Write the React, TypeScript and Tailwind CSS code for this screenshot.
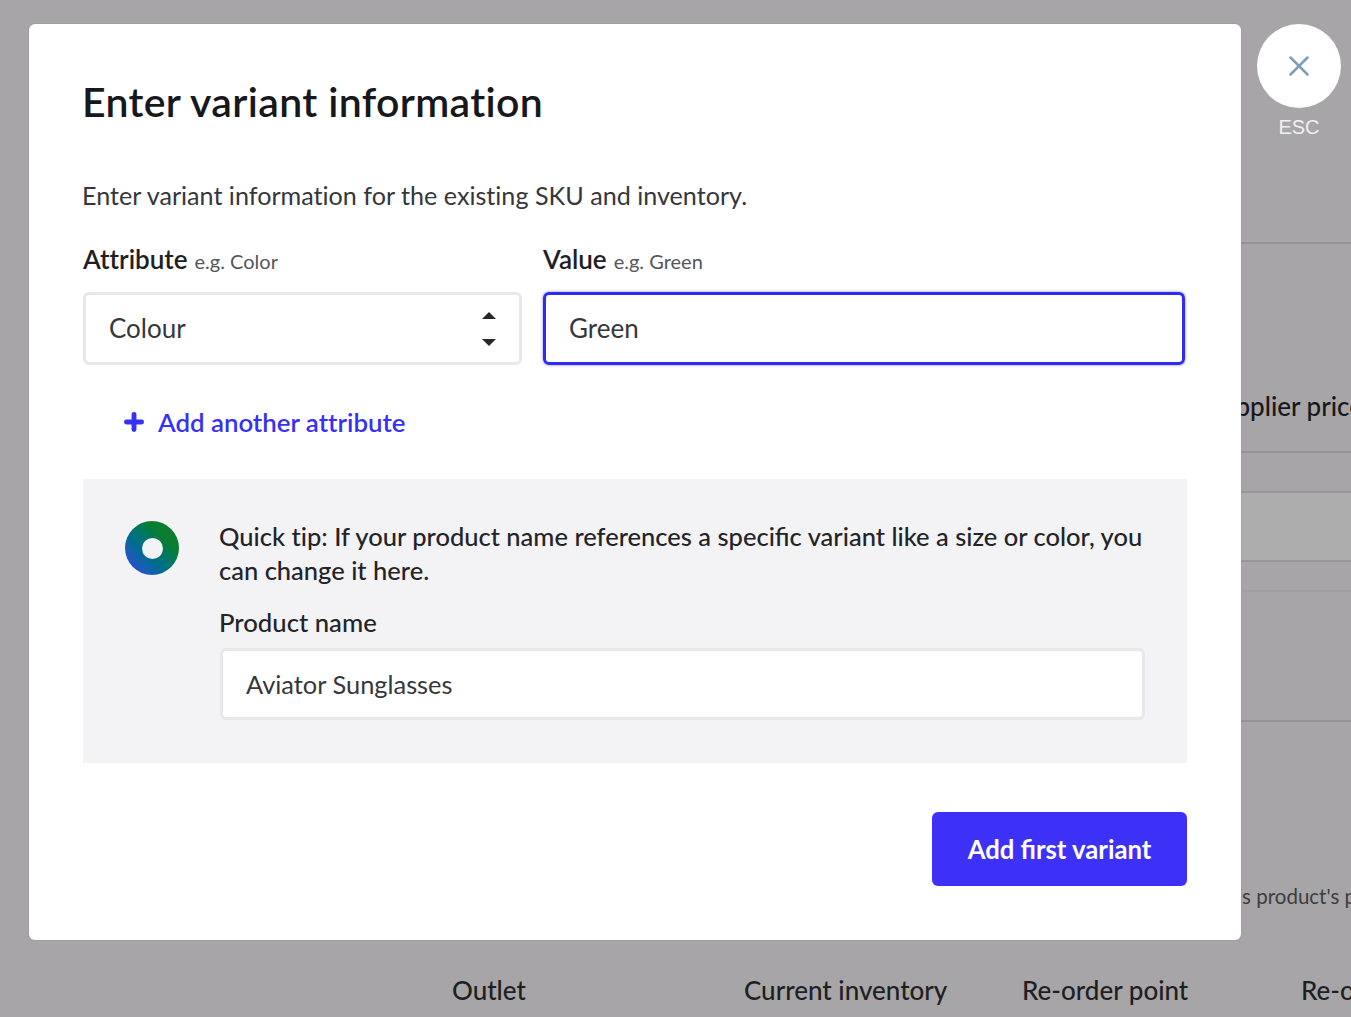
import { X, Plus } from 'lucide-react';

const font = "font-['Lato',sans-serif] [font-variant-ligatures:none]";
const liga = '[font-variant-ligatures:common-ligatures]';

function Field({ label, hint, children }: { label: string; hint: string; children: React.ReactNode }) {
  return (
    <div>
      <div className="flex items-baseline gap-[7px] h-[30px]">
        <span className="text-[26px] leading-[30px] text-[#1f2023] font-semibold">{label}</span>
        <span className="text-[20px] leading-[30px] text-[#55565b]">{hint}</span>
      </div>
      {children}
    </div>
  );
}

export default function App() {
  return (
    <div className={`${font} relative w-[1351px] h-[1017px] overflow-hidden bg-[#a7a5a8]`}>
      {/* Page behind the overlay */}
      <div className="ml-[100px] flex flex-col pt-[242px]">
        <div className="h-[209px] border-t-2 border-[#959396] pl-[1107px] pt-[145px] text-[26px] leading-[34px] font-medium whitespace-nowrap text-[#18181a]">
          Supplier price
        </div>
        <div className="h-[40px] border-t-2 border-[#959396]" />
        <div className="h-[71px] border-y-2 border-[#989699] bg-[#adadad]" />
        <div className="h-[30px] border-b-2 border-[#a09ea1]" />
        <div className="h-[130px] border-b-2 border-[#959396]" />
        <div className="pl-[1084px] pt-[161px] text-[20.5px] leading-[26px] whitespace-nowrap text-[#3d3d40]">
          Set this product's price
        </div>
        <div className="flex pt-[64px] text-[26px] leading-[34px] font-medium whitespace-nowrap text-[#1f1f22]">
          <span className="ml-[352px] w-[292px] shrink-0">Outlet</span>
          <span className="w-[278px] shrink-0">Current inventory</span>
          <span className="w-[279px] shrink-0">Re-order point</span>
          <span className="shrink-0">Re-order</span>
        </div>
      </div>

      {/* Modal */}
      <div className="absolute left-[29px] top-[24px] w-[1212px] h-[916px] rounded-[6px] bg-white pl-[54px] pr-[54px] pt-[53px] shadow-[0_0_0_1px_rgba(0,0,0,0.04)]">
        <h1 className="-ml-px text-[41px] leading-[50px] font-semibold tracking-[0.35px] text-[#17181b]">Enter variant information</h1>
        <p className="-ml-px mt-[51px] text-[25.15px] leading-[34px] text-[#36373b]">
          Enter variant information for the existing SKU and inventory.
        </p>

        <div className="mt-[32px] flex gap-[21px]">
          <div className="w-[439px]">
            <Field label="Attribute" hint="e.g. Color">
              <div className="mt-[18px] flex h-[73px] items-center justify-between rounded-[6px] border-[3px] border-[#e8e8e9] pl-[23px] pr-[23px] text-[26px] text-[#36373b]">
                <span>Colour</span>
                <span className="flex flex-col gap-[20px]">
                  <span className="h-0 w-0 border-x-[7px] border-b-[7px] border-x-transparent border-b-[#27282b]" />
                  <span className="h-0 w-0 border-x-[7px] border-t-[7px] border-x-transparent border-t-[#27282b]" />
                </span>
              </div>
            </Field>
          </div>
          <div className="w-[642px]">
            <Field label="Value" hint="e.g. Green">
              <div className="mt-[18px] flex h-[73px] items-center rounded-[6px] border-[3px] border-[#2f2bf5] pl-[23px] text-[26px] text-[#36373b] shadow-[0_0_3px_rgba(47,43,245,0.6)]">
                Green
              </div>
            </Field>
          </div>
        </div>

        <div className="mt-[40px] flex items-center pl-[38px] text-[#3731f5]">
          <Plus className="h-[26px] w-[26px]" strokeWidth={4.5} />
          <span className="ml-[11px] text-[25.8px] leading-[34px] font-semibold">Add another attribute</span>
        </div>

        <div className="mt-[40px] flex h-[284px] w-[1104px] bg-[#f3f2f5] pl-[42px] pr-[42px] pt-[42px]">
          <div className="mr-[40px] flex h-[54px] w-[54px] shrink-0 items-center justify-center rounded-full bg-gradient-to-tr from-[#3a2bf0] to-[#0b7d2e] to-70%">
            <span className="h-[21px] w-[21px] rounded-full bg-[#f3f2f5]" />
          </div>
          <div className="flex-1">
            <p className="-mt-[2px] text-[25.5px] leading-[34px] font-medium text-[#232428]">
              Quick tip: If your product name references a <span className={liga}>specific</span> variant like a size or color, you can change it here.
            </p>
            <div className="mt-[20px] text-[25.7px] leading-[30px] font-medium text-[#232428]">Product name</div>
            <div className="ml-px mt-[11px] flex h-[72px] items-center rounded-[6px] border-[3px] border-[#e8e8e9] bg-white pl-[23px] text-[25.4px] text-[#36373b]">
              Aviator Sunglasses
            </div>
          </div>
        </div>

        <div className="mt-[49px] flex w-[1104px] justify-end">
          <button className={`h-[74px] w-[255px] rounded-[6px] bg-[#3d31f7] text-[25.7px] font-bold text-white ${liga}`}>
            Add first variant
          </button>
        </div>
      </div>

      {/* Close button */}
      <div className="absolute left-[1257px] top-[24px] flex w-[84px] flex-col items-center">
        <div className="flex h-[84px] w-[84px] items-center justify-center rounded-full bg-white">
          <X className="h-[34px] w-[34px] text-[#7f9cb8]" strokeWidth={1.8} />
        </div>
        <span className="mt-[7px] font-['Liberation_Sans',sans-serif] text-[20px] leading-[24px] text-[#f0f0f1]">ESC</span>
      </div>
    </div>
  );
}
